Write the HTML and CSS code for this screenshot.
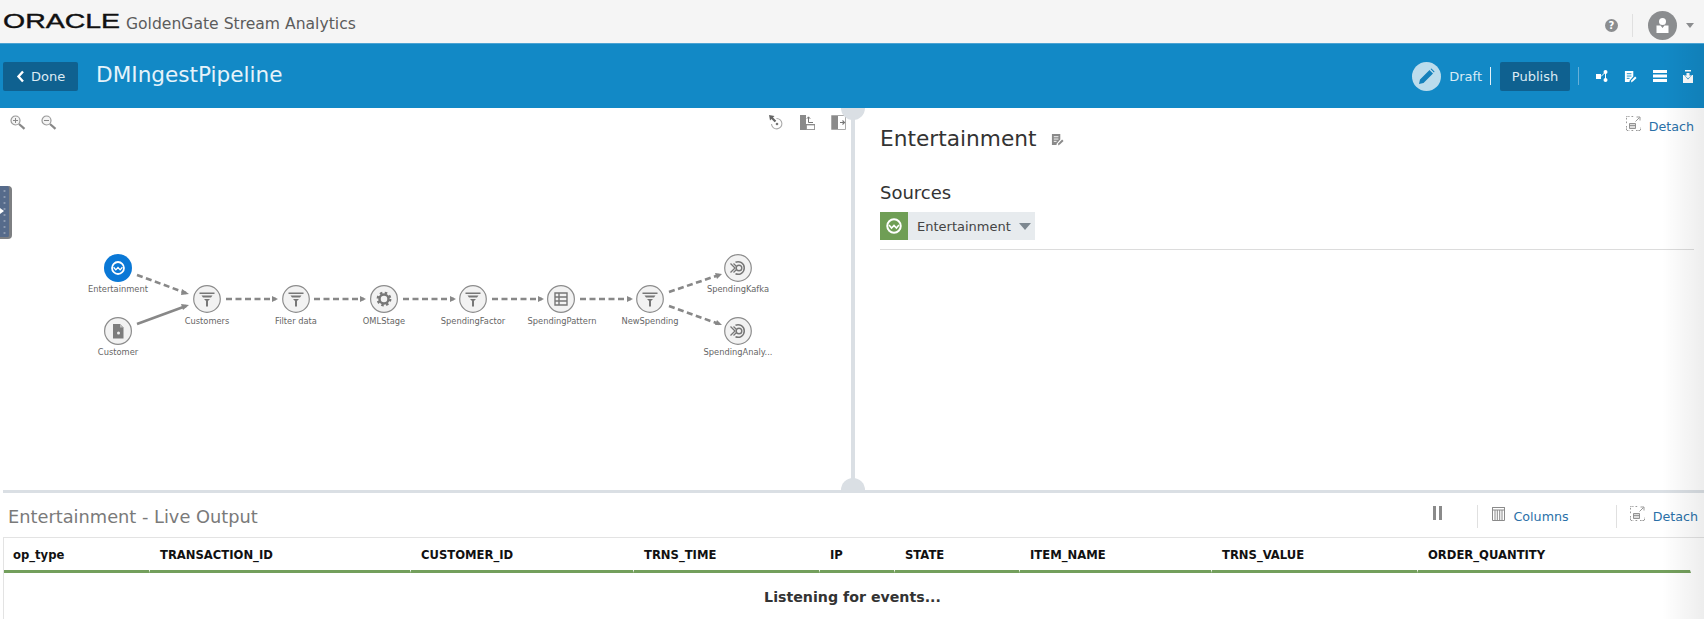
FILE: index.html
```html
<!DOCTYPE html>
<html lang="en">
<head>
  <meta charset="UTF-8">
  <title>GoldenGate Stream Analytics</title>
  <link rel="stylesheet" href="styles.css">
</head>
<body>
  <svg class="defs" width="0" height="0">
    <symbol id="detach-icon" viewBox="0 0 15 15">
      <path d="M0.5 3.500V0.500H3.500M5.500 0.500H8M0.500 5.500V8M0.500 10V14.500H3.500M5.500 14.500H8M10 14.500H14.500V11.500" fill="none" stroke="#999" stroke-width="1" stroke-dasharray="1.600 0.800"/>
      <path d="M9.500 5.500L13.500 1.500M10.500 1H14V4.500" fill="none" stroke="#999" stroke-width="1"/>
      <path d="M3.500 7.500H9.500V12.500H3.500z" fill="#ddd" stroke="#888" stroke-width="0.900"/>
      <path d="M3.500 9.500H9.500" stroke="#888" stroke-width="0.800"/>
    </symbol>
    <symbol id="edit-icon" viewBox="0 0 14 14">
      <path d="M1 1H10V7L6 11.500V13H1z" fill="currentColor"/>
      <path d="M3 4H8M3 6.500H8M3 9H6" stroke="var(--icon-bg)" stroke-width="1"/>
      <path d="M7.500 13.500L8 11L12 7L13.500 8.500L9.500 12.500z" fill="currentColor"/>
    </symbol>
    <symbol id="wave-icon" viewBox="0 0 20 20">
      <circle cx="10" cy="10" r="7.500" fill="none" stroke="currentColor" stroke-width="2.200"/>
      <path d="M4.500 9L7.300 12.300L10 9.300L12.700 12.300L15.500 9" fill="none" stroke="currentColor" stroke-width="1.700"/>
    </symbol>
    <symbol id="filter-icon" viewBox="0 0 28 28">
      <circle cx="14" cy="14" r="13.300" fill="#f2f2f2" stroke="#8c8c8c" stroke-width="1.200"/>
      <path d="M6.500 7.500H21.500V9H6.500zM8.500 10.500H19.500L18 12.500H10zM11 14H17L15 16V21.500H13V16z" fill="#777"/>
    </symbol>
    <symbol id="target-icon" viewBox="0 0 28 28">
      <circle cx="14" cy="14" r="13.300" fill="#f2f2f2" stroke="#8c8c8c" stroke-width="1.200"/>
      <path d="M11.500 8.200A6.300 6.300 0 1 1 11.500 19.800" fill="none" stroke="#777" stroke-width="1.500"/>
      <circle cx="15" cy="14" r="2.800" fill="none" stroke="#777" stroke-width="1.400"/>
      <path d="M6.500 9.500L11 14L6.500 18.500M9.500 9.500L12.500 12.500M9.500 18.500L12.500 15.500" fill="none" stroke="#777" stroke-width="1.300"/>
    </symbol>
  </svg>

  <header class="brand-bar">
    <div class="brand">
      <svg class="oracle-logo" width="120" height="28" viewBox="0 0 120 28">
        <text x="1" y="21" textLength="117" lengthAdjust="spacingAndGlyphs">ORACLE</text>
      </svg>
      <span class="product-name">GoldenGate Stream Analytics</span>
    </div>
    <div class="user-tools">
      <span class="help-btn">?</span>
      <span class="tool-sep"></span>
      <svg class="avatar" width="29" height="29" viewBox="0 0 29 29">
        <circle cx="14.500" cy="14.500" r="14.500" fill="#8b8d8f"/>
        <circle cx="14.500" cy="10.500" r="3.500" fill="#fff"/>
        <path d="M8.500 14.500H12.500L14.500 17L16.500 14.500H20.500V22H8.500z" fill="#fff"/>
      </svg>
      <span class="caret caret-user"></span>
    </div>
  </header>

  <div class="title-bar">
    <a class="dark-btn done-btn">
      <svg width="9" height="13" viewBox="0 0 9 13"><path d="M7 1.500L2.500 6.500L7 11.500" fill="none" stroke="#fff" stroke-width="2.400"/></svg>
      Done
    </a>
    <h1 class="pipeline-name">DMIngestPipeline</h1>
    <div class="title-actions">
      <span class="pencil-badge">
        <svg width="17" height="17" viewBox="0 0 17 17"><path d="M1 16L2 11.500L11.500 2L15 5.500L5.500 15zM12.500 1L13.500 0.500L16.500 3.500L16 4.500z" fill="#1480bb"/></svg>
      </span>
      <span class="draft-label">Draft</span>
      <span class="bar-sep bar-sep-bright"></span>
      <a class="dark-btn publish-btn">Publish</a>
      <span class="bar-sep"></span>
      <svg class="bar-icon" width="12" height="12" viewBox="0 0 12 12"><path d="M0 4H5V9H0z" fill="#fff"/><circle cx="9.500" cy="2" r="2" fill="#fff"/><circle cx="9.500" cy="10" r="2" fill="#fff"/><path d="M5 6.500L9.500 2M9.500 2V10" stroke="#fff" stroke-width="1"/></svg>
      <svg class="bar-icon edit-white" width="13" height="13"><use href="#edit-icon"/></svg>
      <svg class="bar-icon" width="14" height="12" viewBox="0 0 14 12"><path d="M0 0H14V3H0zM0 4.500H14V7.500H0zM0 9H14V12H0z" fill="#fff"/></svg>
      <svg class="bar-icon" width="10" height="13" viewBox="0 0 10 13"><path d="M2 0H8V1.500H2z" fill="#fff"/><path d="M3.500 3H6.500V5.500H8.500L5 8.500L1.500 5.500H3.500z" fill="#fff"/><path d="M0 5H1L5 9.500L9 5H10V13H0z" fill="#fff"/></svg>
    </div>
  </div>

  <main class="workspace">
    <section class="top-panes">
      <div class="canvas-pane">
        <div class="canvas-tools">
          <div class="zoom-tools">
            <svg width="16" height="15" viewBox="0 0 16 15"><circle cx="5.500" cy="5.500" r="4.500" fill="#f4f4f4" stroke="#999" stroke-width="1.200"/><path d="M3 5.500H8M5.500 3V8" stroke="#888" stroke-width="1"/><path d="M9 9L14.500 13.800" stroke="#888" stroke-width="2.200"/></svg>
            <svg width="16" height="15" viewBox="0 0 16 15"><circle cx="5.500" cy="5.500" r="4.500" fill="#f4f4f4" stroke="#999" stroke-width="1.200"/><path d="M3 5.500H8" stroke="#888" stroke-width="1"/><path d="M9 9L14.500 13.800" stroke="#888" stroke-width="2.200"/></svg>
          </div>
          <div class="layout-tools">
            <svg width="15" height="15" viewBox="0 0 15 15"><path d="M0 0L5.500 1L1 5.500z" fill="#666"/><path d="M2 2L6.500 6.500" stroke="#666" stroke-width="2.200"/><path d="M7.500 3.500A5.200 5.200 0 1 1 2.500 9" fill="none" stroke="#aaa" stroke-width="1.100"/><circle cx="8" cy="9" r="1.300" fill="#777"/></svg>
            <svg width="15" height="15" viewBox="0 0 15 15"><path d="M0 0H6V9H15V15H0z" fill="#8a8a8a"/><path d="M6.500 10H14.500V14.500H6.500z" fill="#fff" stroke="#8a8a8a" stroke-width="0.700"/><path d="M8.500 2V7.500H13M6.800 3.800L8.500 1.800L10.200 3.800" fill="none" stroke="#777" stroke-width="1"/></svg>
            <svg width="15" height="15" viewBox="0 0 15 15"><path d="M0.500 0.500H14.500V14.500H0.500z" fill="#fff" stroke="#aaa"/><path d="M1 1H7V14H1z" fill="#8a8a8a"/><path d="M9 7.500H13M11.500 5.500L13.500 7.500L11.500 9.500" fill="none" stroke="#777" stroke-width="1.100"/></svg>
          </div>
        </div>

        <svg class="pipeline-graph" width="851" height="382" viewBox="0 108 851 382">
          <g class="edge">
            <path d="M137 275L186 293"/>
            <path d="M226 299H276"/>
            <path d="M314 299H364"/>
            <path d="M403 299H454"/>
            <path d="M492 299H542"/>
            <path d="M580 299H631"/>
            <path d="M669 292L719 275"/>
            <path d="M669 306L719 324"/>
          </g>
          <path class="edge-solid" d="M137 324L186 306"/>
          <path class="arrow-head" d="M182 289L189 294L181 295z"/>
          <path class="arrow-head" d="M181 304L189 305L183 310z"/>
          <path class="arrow-head" d="M272 296L278 299L272 302z"/>
          <path class="arrow-head" d="M360 296L366 299L360 302z"/>
          <path class="arrow-head" d="M450 296L456 299L450 302z"/>
          <path class="arrow-head" d="M538 296L544 299L538 302z"/>
          <path class="arrow-head" d="M627 296L633 299L627 302z"/>
          <path class="arrow-head" d="M715 273L722 274L717 279z"/>
          <path class="arrow-head" d="M717 320L722 325L715 325z"/>

          <circle cx="118" cy="268" r="14" fill="#0a78d6"/>
          <svg x="110" y="260" width="16" height="16" class="wave-white"><use href="#wave-icon"/></svg>
          <circle cx="118" cy="331" r="13.400" fill="#f2f2f2" stroke="#8c8c8c" stroke-width="1.200"/>
          <path d="M113 324H120L123.500 327.500V338.500H113z" fill="#7d7d7d"/>
          <path d="M120 324V327.500H123.500z" fill="#bbb"/>
          <circle cx="118.500" cy="333" r="1.500" fill="#eee"/>

          <use href="#filter-icon" x="193" y="285" width="28" height="28"/>
          <use href="#filter-icon" x="282" y="285" width="28" height="28"/>
          <circle cx="384" cy="299" r="13.400" fill="#f2f2f2" stroke="#8c8c8c" stroke-width="1.200"/>
          <circle cx="384" cy="299" r="4.500" fill="none" stroke="#777" stroke-width="2.500"/>
          <circle cx="384" cy="299" r="6.300" fill="none" stroke="#777" stroke-width="2.200" stroke-dasharray="2.500 2.450"/>
          <use href="#filter-icon" x="459" y="285" width="28" height="28"/>
          <circle cx="561" cy="299" r="13.400" fill="#f2f2f2" stroke="#8c8c8c" stroke-width="1.200"/>
          <path d="M555 293H567V305H555zM555 297H567M555 301H567M559 293V305" fill="none" stroke="#777" stroke-width="1.400"/>
          <use href="#filter-icon" x="636" y="285" width="28" height="28"/>
          <use href="#target-icon" x="724" y="254" width="28" height="28"/>
          <use href="#target-icon" x="724" y="317" width="28" height="28"/>

          <g class="node-label">
            <text x="118" y="292">Entertainment</text>
            <text x="207" y="324">Customers</text>
            <text x="118" y="355">Customer</text>
            <text x="296" y="324">Filter data</text>
            <text x="384" y="324">OMLStage</text>
            <text x="473" y="324">SpendingFactor</text>
            <text x="562" y="324">SpendingPattern</text>
            <text x="650" y="324">NewSpending</text>
            <text x="738" y="292">SpendingKafka</text>
            <text x="738" y="355">SpendingAnaly...</text>
          </g>
        </svg>
      </div>

      <div class="v-divider"><span class="knob knob-top"></span></div>

      <div class="detail-pane">
        <a class="detach-link detail-detach">
          <svg width="15" height="15"><use href="#detach-icon"/></svg>
          <span>Detach</span>
        </a>
        <h2 class="stage-name">Entertainment
          <svg class="stage-edit" width="13" height="13"><use href="#edit-icon"/></svg>
        </h2>
        <h3 class="sources-title">Sources</h3>
        <div class="source-row">
          <div class="source-chip">
            <span class="chip-icon"><svg width="18" height="18" class="wave-white"><use href="#wave-icon"/></svg></span>
            <span class="chip-text">Entertainment</span>
            <span class="caret caret-chip"></span>
          </div>
        </div>
      </div>
    </section>

    <div class="h-divider"><span class="knob knob-bottom"></span></div>

    <section class="output-pane">
      <div class="output-head">
        <h3 class="output-title">Entertainment - Live Output</h3>
        <div class="output-tools">
          <span class="pause-icon"></span>
          <span class="tool-sep output-sep"></span>
          <a class="detach-link columns-link">
            <svg width="13" height="14" viewBox="0 0 13 14"><path d="M0.500 0.500H12.500V13.500H0.500z" fill="#fff" stroke="#8a8a8a"/><path d="M0.500 0.500H12.500V3H0.500zM3 3V13M5.300 3V13M7.700 3V13M10 3V13" fill="none" stroke="#8a8a8a"/></svg>
            <span>Columns</span>
          </a>
          <span class="tool-sep output-sep"></span>
          <a class="detach-link">
            <svg width="15" height="15"><use href="#detach-icon"/></svg>
            <span>Detach</span>
          </a>
        </div>
      </div>

      <div class="live-table">
        <div class="table-head">
          <div>op_type</div>
          <div>TRANSACTION_ID</div>
          <div>CUSTOMER_ID</div>
          <div>TRNS_TIME</div>
          <div>IP</div>
          <div>STATE</div>
          <div>ITEM_NAME</div>
          <div>TRNS_VALUE</div>
          <div>ORDER_QUANTITY</div>
        </div>
        <p class="listening">Listening for events...</p>
      </div>
    </section>

    <div class="side-tab"><span class="side-arrow"></span></div>
  </main>
  <div class="edge-fade"></div>
</body>
</html>
```

FILE: styles.css
```css
:root {
  --blue: #1289c6;
  --dark-blue: #0f6190;
  --link: #2a70a8;
  --line: #dadfe4;
  --green: #739f5c;
  --icon-gray: #8a8a8a;
}

* {
  box-sizing: border-box;
}

html, body {
  margin: 0;
  height: 619px;
  overflow: hidden;
}

body {
  font-family: "DejaVu Sans", sans-serif;
  background-color: #fff;
  color: #333;
  position: relative;
}

h1, h2, h3, p {
  margin: 0;
  font-weight: normal;
}

.defs {
  position: absolute;
}

/* top bar */
.brand-bar {
  height: 43px;
  background-color: #f5f5f5;
  display: flex;
  align-items: center;
  justify-content: space-between;
}

.brand {
  display: flex;
  align-items: center;
  padding-left: 2px;
}

.oracle-logo {
  margin-top: -2px;
}

.oracle-logo text {
  font-family: "Liberation Sans", sans-serif;
  font-size: 21px;
  fill: #111;
  stroke: #111;
  stroke-width: 0.4px;
}

.product-name {
  font-size: 15.6px;
  color: #5c5c5c;
  margin-left: 4px;
  margin-top: 4px;
}

.user-tools {
  display: flex;
  align-items: center;
  padding-right: 10px;
  margin-top: 7px;
}

.help-btn {
  width: 13px;
  height: 13px;
  margin-left: 1px;
  border-radius: 50%;
  background-color: #8b8d8f;
  color: #fff;
  font-size: 10px;
  font-weight: bold;
  line-height: 13px;
  text-align: center;
}

.tool-sep {
  width: 1px;
  height: 23px;
  margin: 0 15px 0 14px;
  background-color: #e0e0e0;
}

.caret {
  width: 0;
  height: 0;
  border-left: 4px solid transparent;
  border-right: 4px solid transparent;
  border-top: 5px solid #8b8d8f;
}

.caret-user {
  margin-left: 9px;
}

/* blue bar */
.title-bar {
  height: 65px;
  background-color: var(--blue);
  border-top: 1px solid #4ba3d3;
  display: flex;
  align-items: center;
  padding-left: 3px;
  padding-right: 11px;
}

.dark-btn {
  height: 29px;
  background-color: var(--dark-blue);
  color: #dcebf4;
  font-size: 13px;
  border-radius: 2px;
  display: flex;
  align-items: center;
}

.done-btn {
  width: 75px;
  padding-left: 13px;
  gap: 6px;
}

.pipeline-name {
  font-size: 21.6px;
  color: #e6f3fa;
  margin-left: 18px;
  margin-top: -4px;
}

.title-actions {
  margin-left: auto;
  display: flex;
  align-items: center;
}

.pencil-badge {
  width: 29px;
  height: 29px;
  border-radius: 50%;
  background-color: #bcdcec;
  display: flex;
  align-items: center;
  justify-content: center;
}

.draft-label {
  font-size: 13px;
  color: #d9ebf5;
  margin-left: 8px;
}

.bar-sep {
  width: 1px;
  height: 18px;
  background-color: #66b0d9;
  margin: 0 17px 0 8px;
}

.bar-sep-bright {
  background-color: #e4f1f8;
  margin-right: 9px;
}

.publish-btn {
  width: 70px;
  justify-content: center;
}

.bar-icon {
  margin-right: 16px;
}

.bar-icon:last-child {
  margin-right: 0;
}

.edit-white {
  color: #fff;
  --icon-bg: #1289c6;
}

/* workspace */
.workspace {
  position: relative;
  height: 511px;
}

.top-panes {
  height: 382px;
  display: flex;
}

.canvas-pane {
  width: 851px;
  position: relative;
  flex-shrink: 0;
}

.canvas-tools {
  position: absolute;
  top: 7px;
  left: 10px;
  right: 5px;
  display: flex;
  justify-content: space-between;
}

.zoom-tools, .layout-tools {
  display: flex;
}

.zoom-tools {
  gap: 15px;
}

.layout-tools {
  gap: 16px;
}

.pipeline-graph {
  display: block;
}

.edge path {
  fill: none;
  stroke: #888;
  stroke-width: 2.6;
  stroke-dasharray: 6 3.5;
}

.edge-solid {
  fill: none;
  stroke: #888;
  stroke-width: 2.6;
}

.arrow-head {
  fill: #888;
}

.wave-white {
  color: #fff;
}

.node-label text {
  font-size: 8.3px;
  fill: #666;
  text-anchor: middle;
}

.v-divider {
  width: 4px;
  background-color: var(--line);
  position: relative;
  flex-shrink: 0;
}

.knob {
  position: absolute;
  width: 24px;
  height: 24px;
  border-radius: 50%;
  background-color: var(--line);
}

.knob-top {
  top: -12px;
  left: -10px;
  clip-path: inset(12px 0 0 0);
}

.detail-pane {
  flex: 1;
  padding: 11px 10px 0 25px;
  display: flex;
  flex-direction: column;
}

.detach-link {
  display: flex;
  align-items: center;
  gap: 8px;
  color: var(--link);
  font-size: 12.7px;
}

.detach-link svg {
  margin-top: -6px;
}

.detail-detach {
  align-self: flex-end;
}

.stage-name {
  font-size: 21.7px;
  color: #333;
  margin-top: -8px;
  display: flex;
  align-items: center;
  gap: 14px;
}

.stage-edit {
  color: var(--icon-gray);
  --icon-bg: #fff;
  margin-top: 1px;
}

.sources-title {
  font-size: 18px;
  margin-top: 31px;
}

.source-row {
  margin-top: 9px;
  padding-bottom: 9px;
  border-bottom: 1px solid #dcdcdc;
}

.source-chip {
  width: 155px;
  height: 28px;
  background-color: #e7ebee;
  display: flex;
  align-items: center;
}

.chip-icon {
  width: 28px;
  height: 28px;
  background-color: #6f9e55;
  display: flex;
  align-items: center;
  justify-content: center;
}

.chip-text {
  font-size: 13px;
  color: #444;
  margin-left: 9px;
}

.caret-chip {
  margin-left: 8px;
  border-left-width: 6px;
  border-right-width: 6px;
  border-top: 7px solid #7d8890;
}

.h-divider {
  height: 3px;
  margin-left: 3px;
  background-color: var(--line);
  position: relative;
}

.knob-bottom {
  top: -12px;
  left: 838px;
  clip-path: inset(0 0 9px 0);
}

/* live output */
.output-pane {
  padding-left: 3px;
  position: relative;
}

.output-head {
  height: 44px;
  display: flex;
  align-items: flex-start;
  justify-content: space-between;
}

.output-title {
  font-size: 17.8px;
  color: #7a7a7a;
  margin: 13px 0 0 5px;
}

.output-tools {
  display: flex;
  align-items: center;
  padding: 12px 6px 0 0;
}

.pause-icon {
  width: 9px;
  height: 14px;
  border-left: 3.500px solid #8a8a8a;
  border-right: 3.500px solid #8a8a8a;
  margin: -8px 35px 0 0;
}

.output-sep {
  margin: 0;
}

.columns-link {
  margin: 0 47px 0 14px;
}

.output-sep + .detach-link:last-child {
  margin-left: 13px;
}

.live-table {
  height: 90px;
  border-top: 1px solid #e3e3e3;
  border-left: 1px solid #e3e3e3;
}

.table-head {
  display: grid;
  grid-template-columns: 146px 261px 223px 186px 75px 125px 192px 206px 273px;
  width: 1687px;
  height: 35px;
}

.table-head div {
  font-size: 11.6px;
  font-weight: bold;
  color: #111;
  padding: 10px 0 0 10px;
  border-bottom: 3px solid var(--green);
  border-right: 1px solid #fff;
}

.table-head div:first-child {
  padding-left: 9px;
}

.listening {
  font-size: 14.2px;
  font-weight: bold;
  color: #333;
  text-align: center;
  margin-top: 16px;
  padding-right: 3px;
}

/* collapsed palette tab */
.side-tab {
  position: absolute;
  left: 0;
  top: 78px;
  width: 12px;
  height: 53px;
  background-color: #566b8b;
  background-image: radial-gradient(circle, #8c9ab0 1px, transparent 1.2px);
  background-size: 9px 6px;
  background-position: 0 2px;
  border-right: 3px solid #7d7f82;
  border-bottom: 2px solid #7d7f82;
  border-radius: 0 4px 4px 0;
}

.side-arrow {
  position: absolute;
  left: 0;
  top: 22px;
  border-left: 4px solid #fff;
  border-top: 3px solid transparent;
  border-bottom: 3px solid transparent;
}

/* soft shadow down the right edge */
.edge-fade {
  position: absolute;
  top: 44px;
  right: 0;
  bottom: 0;
  width: 42px;
  background: linear-gradient(to right, rgba(0, 0, 0, 0), rgba(0, 0, 0, 0.07));
  pointer-events: none;
}
```
